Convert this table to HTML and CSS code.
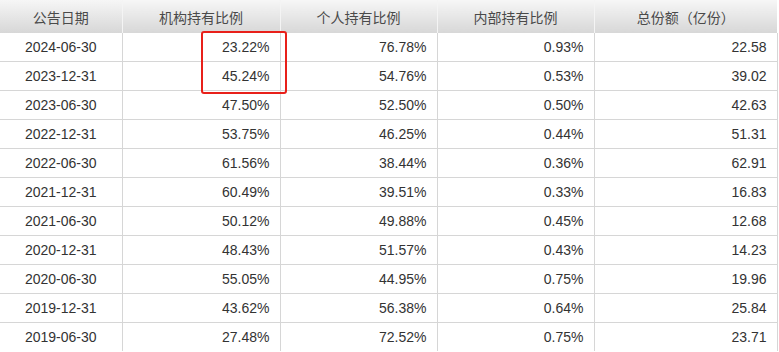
FILE: index.html
```html
<!DOCTYPE html>
<html lang="zh">
<head>
<meta charset="utf-8">
<link rel="stylesheet" href="styles.css">
</head>
<body>
<div class="wrap">
<table class="grid">
<colgroup><col class="c1"><col class="c2"><col class="c3"><col class="c4"><col class="c5"></colgroup>
<thead>
<tr><th>公告日期</th><th>机构持有比例</th><th>个人持有比例</th><th>内部持有比例</th><th>总份额（亿份）</th></tr>
</thead>
<tbody>
<tr><td class="d">2024-06-30</td><td>23.22%</td><td>76.78%</td><td>0.93%</td><td>22.58</td></tr>
<tr><td class="d">2023-12-31</td><td>45.24%</td><td>54.76%</td><td>0.53%</td><td>39.02</td></tr>
<tr><td class="d">2023-06-30</td><td>47.50%</td><td>52.50%</td><td>0.50%</td><td>42.63</td></tr>
<tr><td class="d">2022-12-31</td><td>53.75%</td><td>46.25%</td><td>0.44%</td><td>51.31</td></tr>
<tr><td class="d">2022-06-30</td><td>61.56%</td><td>38.44%</td><td>0.36%</td><td>62.91</td></tr>
<tr><td class="d">2021-12-31</td><td>60.49%</td><td>39.51%</td><td>0.33%</td><td>16.83</td></tr>
<tr><td class="d">2021-06-30</td><td>50.12%</td><td>49.88%</td><td>0.45%</td><td>12.68</td></tr>
<tr><td class="d">2020-12-31</td><td>48.43%</td><td>51.57%</td><td>0.43%</td><td>14.23</td></tr>
<tr><td class="d">2020-06-30</td><td>55.05%</td><td>44.95%</td><td>0.75%</td><td>19.96</td></tr>
<tr><td class="d">2019-12-31</td><td>43.62%</td><td>56.38%</td><td>0.64%</td><td>25.84</td></tr>
<tr><td class="d">2019-06-30</td><td>27.48%</td><td>72.52%</td><td>0.75%</td><td>23.71</td></tr>
</tbody>
</table>
<div class="mark"></div>
</div>
</body>
</html>
```
FILE: styles.css
```css
html, body {
  margin: 0;
  padding: 0;
  background: #fff;
}
.wrap {
  position: relative;
  width: 779px;
}
.grid {
  border-collapse: collapse;
  table-layout: fixed;
  width: 777px;
  font-family: "Liberation Sans", Arial, "Noto Sans CJK SC", sans-serif;
  font-size: 14px;
  color: #333;
}
.c1 { width: 122px; }
.c2 { width: 158px; }
.c3 { width: 157px; }
.c4 { width: 157px; }
.c5 { width: 183px; }
.grid th {
  height: 33px;
  padding: 0;
  font-weight: normal;
  font-family: "Noto Sans CJK SC", "Liberation Sans", sans-serif;
  font-size: 14px;
  line-height: 18px;
  color: #4a4a4a;
  text-align: center;
  background: linear-gradient(#f6f6f6, #d7d7d7);
  border-left: 1px solid #f4f4f4;
  vertical-align: middle;
}
.grid th:first-child { border-left: none; }
.grid td {
  height: 28px;
  padding: 0 10px 0 0;
  line-height: 16px;
  text-align: right;
  border-bottom: 1px solid #d6d6d6;
  border-left: 1px solid #d6d6d6;
  vertical-align: middle;
}
.grid td.d {
  text-align: center;
  padding: 0;
  border-left: none;
}
.grid tbody tr:last-child td { border-bottom: none; }
.grid td:last-child { border-right: 1px solid #d6d6d6; }
.mark {
  position: absolute;
  left: 201px;
  top: 31px;
  width: 86px;
  height: 63px;
  box-sizing: border-box;
  border: 2px solid #e8201a;
  border-radius: 3px;
}
```
